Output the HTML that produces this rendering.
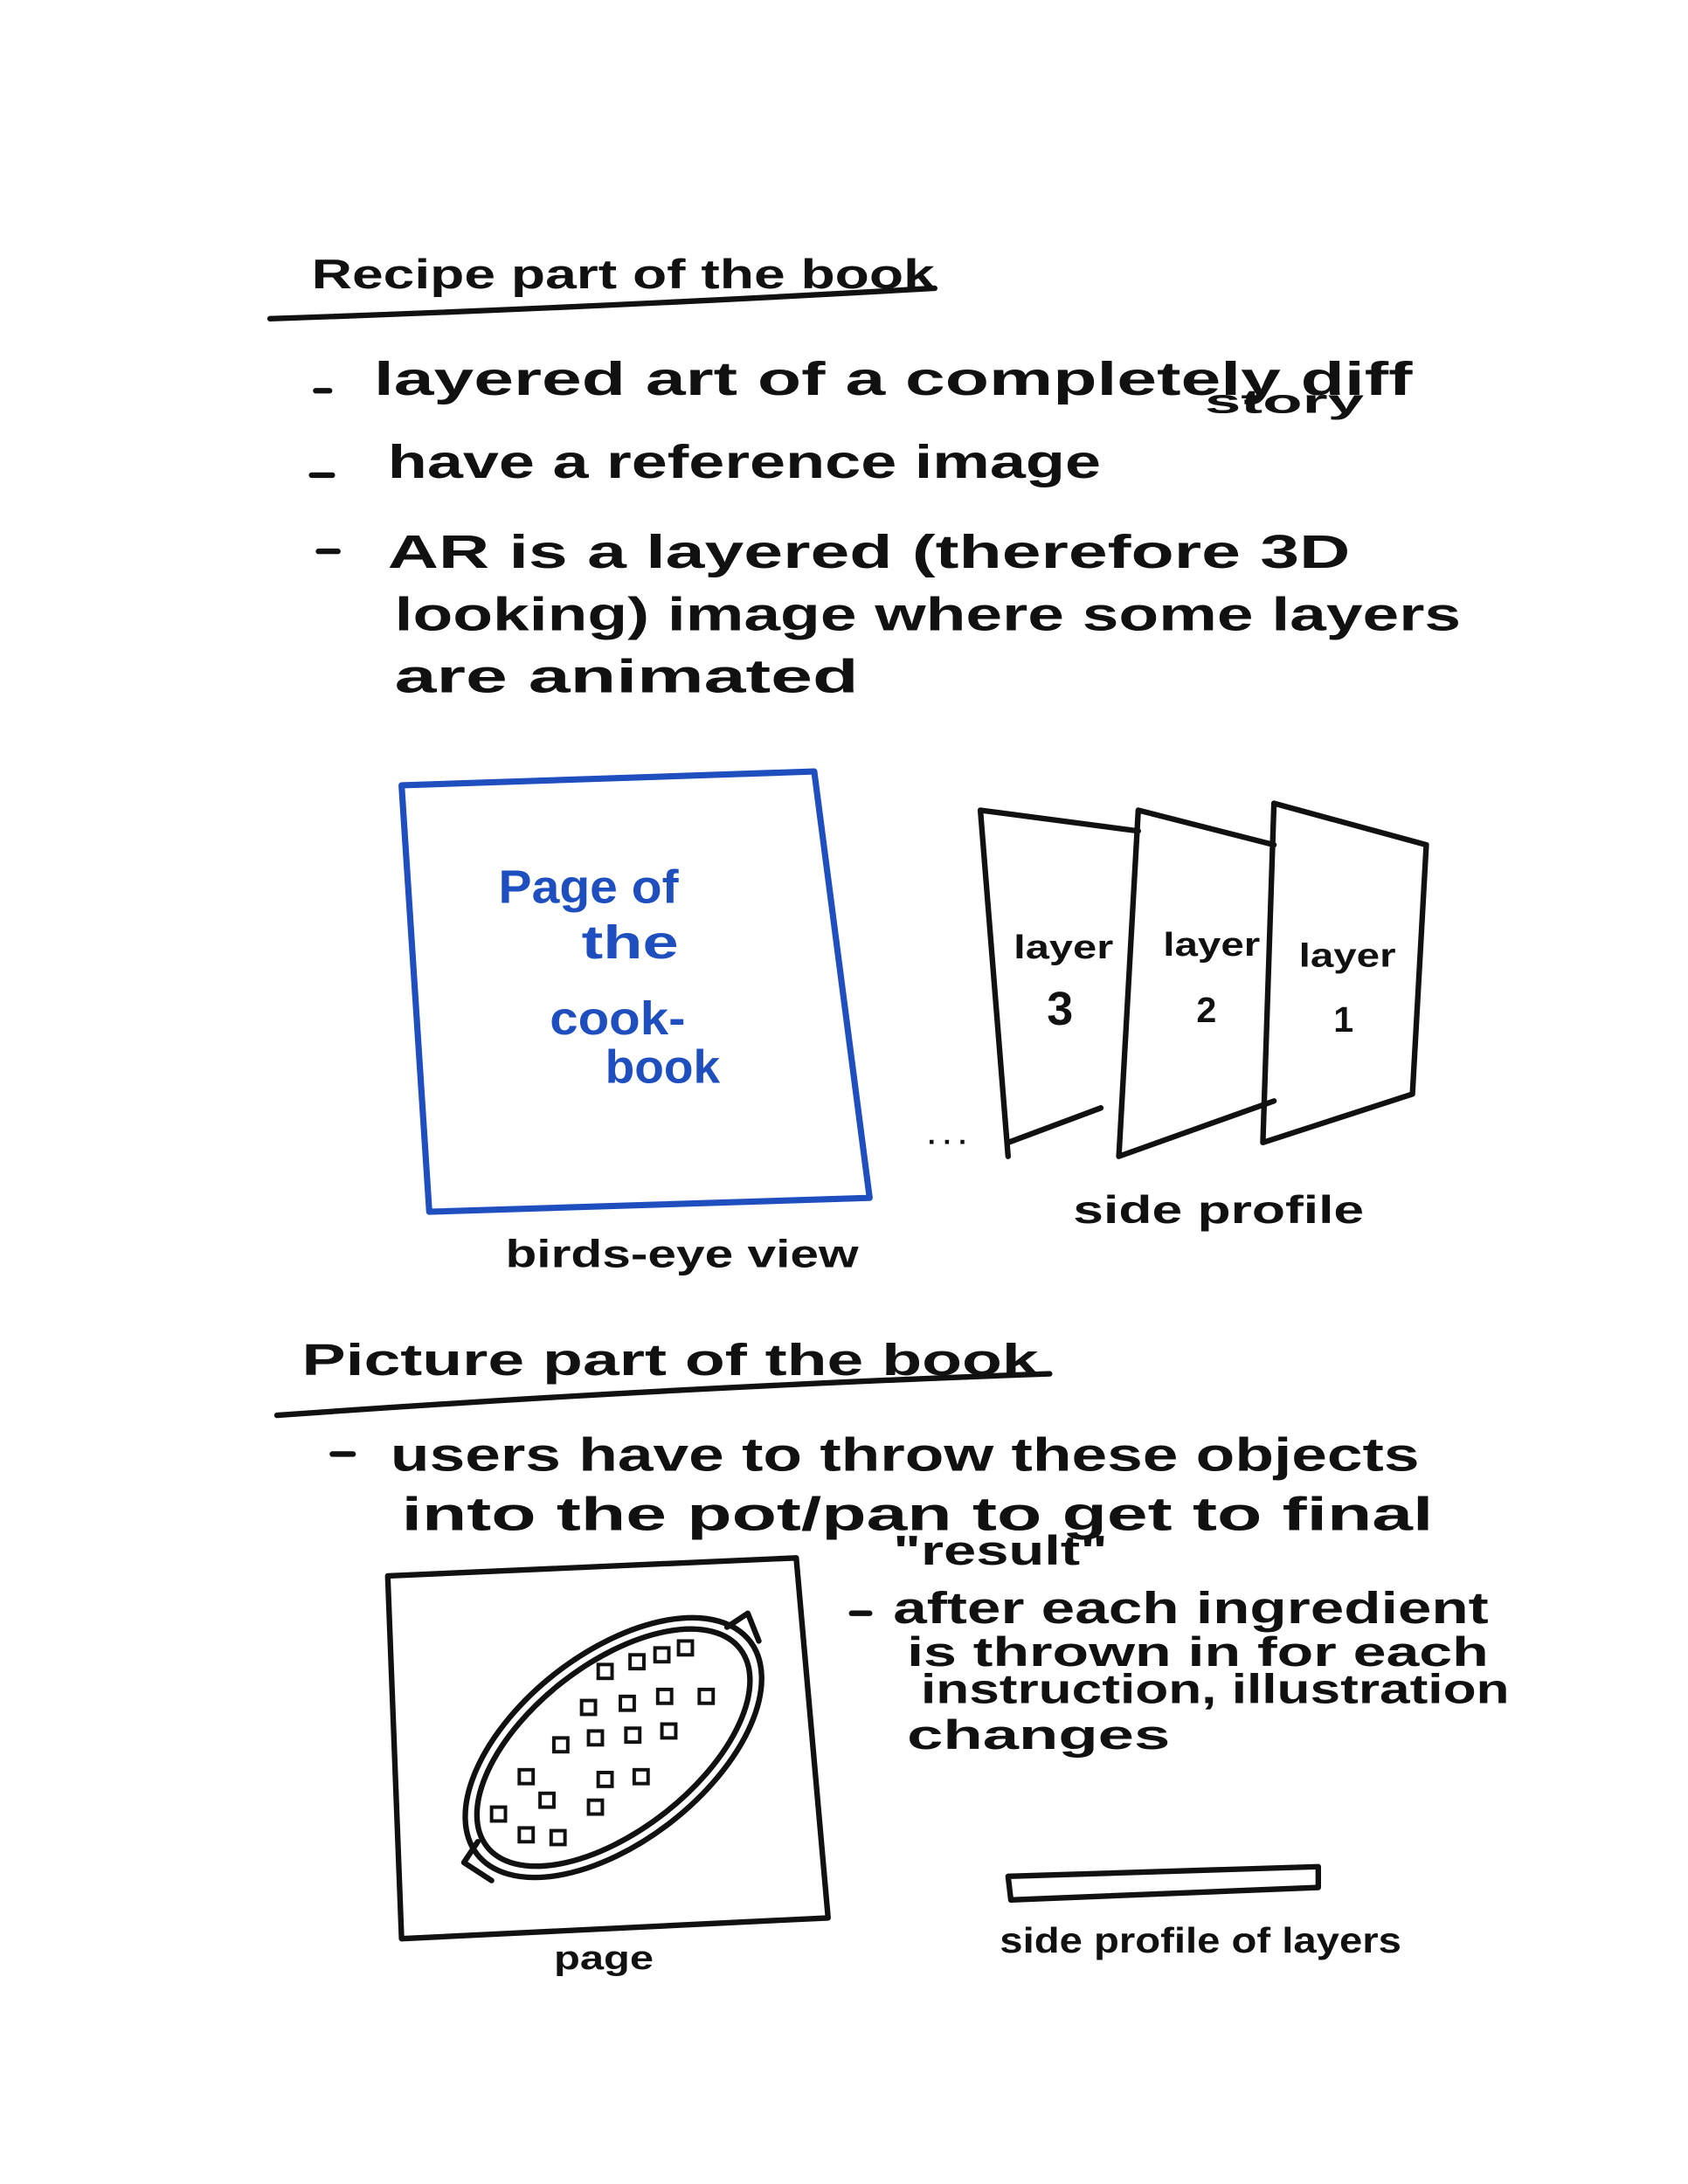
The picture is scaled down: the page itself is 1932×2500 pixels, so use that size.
<!DOCTYPE html>
<html><head><meta charset="utf-8"><style>
html,body{margin:0;padding:0;background:#fff;}
svg{display:block;}
text{font-family:"Liberation Sans",sans-serif;font-weight:bold;fill:#111;}
.b{fill:#1f4fbf;}
</style></head><body>
<svg width="1932" height="2500" viewBox="0 0 1219 1577" xmlns="http://www.w3.org/2000/svg">
<rect width="1219" height="1577" fill="#fff"/>
<g stroke="#111" stroke-width="4" fill="none" stroke-linecap="round" stroke-linejoin="round">
<path d="M195 230 Q430 222 675 208"/>
<path d="M228 282 L238 282 M225 343 L240 343 M230 398 L244 398"/>
<path d="M708 585 L822 600 M708 585 L728 835 M728 825 L795 800"/>
<path d="M822 585 L920 610 M822 585 L808 835 M808 835 L920 795"/>
<path d="M920 580 L1030 610 L1020 790 L912 825 L920 580"/>
<path d="M200 1022 Q480 1002 758 992"/>
<path d="M240 1050 L255 1050 M615 1165 L628 1165"/>
<path d="M280 1138 L575 1125 L598 1385 L290 1400 Z"/>
<ellipse cx="443" cy="1262" rx="125" ry="68" transform="rotate(-38 443 1262)"/>
<ellipse cx="443" cy="1262" rx="116" ry="60" transform="rotate(-38 443 1262)"/>
<path d="M525 1175 L540 1165 L548 1185 M345 1330 L335 1345 L355 1358"/>
<path d="M728 1355 L952 1348 L952 1363 L730 1372 Z"/>
<text x="670" y="826" stroke="none" style="font-size:20px">. . .</text>
</g>
<g stroke="#111" stroke-width="2.5" fill="none">
<rect x="432" y="1202" width="10" height="10"/><rect x="455" y="1195" width="10" height="10"/><rect x="473" y="1190" width="10" height="10"/><rect x="490" y="1185" width="10" height="10"/>
<rect x="420" y="1228" width="10" height="10"/><rect x="448" y="1225" width="10" height="10"/><rect x="475" y="1220" width="10" height="10"/><rect x="505" y="1220" width="10" height="10"/>
<rect x="400" y="1255" width="10" height="10"/><rect x="425" y="1250" width="10" height="10"/><rect x="452" y="1248" width="10" height="10"/><rect x="478" y="1245" width="10" height="10"/>
<rect x="375" y="1278" width="10" height="10"/><rect x="432" y="1280" width="10" height="10"/><rect x="458" y="1278" width="10" height="10"/>
<rect x="390" y="1295" width="10" height="10"/><rect x="355" y="1305" width="10" height="10"/><rect x="425" y="1300" width="10" height="10"/>
<rect x="375" y="1320" width="10" height="10"/><rect x="398" y="1322" width="10" height="10"/>
</g>
<path d="M290 567 L588 557 L628 865 L310 875 Z" fill="none" stroke="#1f4fbf" stroke-width="4.5" stroke-linejoin="round"/>
<text x="225" y="208" font-size="30" textLength="450" lengthAdjust="spacingAndGlyphs">Recipe part of the book</text>
<text x="270" y="285" font-size="34" textLength="750" lengthAdjust="spacingAndGlyphs">layered art of a completely diff</text>
<text x="870" y="298" font-size="24" textLength="115" lengthAdjust="spacingAndGlyphs">story</text>
<text x="280" y="345" font-size="34" textLength="515" lengthAdjust="spacingAndGlyphs">have a reference image</text>
<text x="280" y="410" font-size="34" textLength="695" lengthAdjust="spacingAndGlyphs">AR is a layered (therefore 3D</text>
<text x="285" y="455" font-size="34" textLength="770" lengthAdjust="spacingAndGlyphs">looking) image where some layers</text>
<text x="285" y="500" font-size="34" textLength="335" lengthAdjust="spacingAndGlyphs">are animated</text>
<text class="b" x="360" y="652" font-size="34" textLength="130" lengthAdjust="spacingAndGlyphs">Page of</text>
<text class="b" x="420" y="692" font-size="34" textLength="70" lengthAdjust="spacingAndGlyphs">the</text>
<text class="b" x="397" y="747" font-size="34" textLength="98" lengthAdjust="spacingAndGlyphs">cook-</text>
<text class="b" x="437" y="782" font-size="34" textLength="83" lengthAdjust="spacingAndGlyphs">book</text>
<text x="365" y="915" font-size="28" textLength="255" lengthAdjust="spacingAndGlyphs">birds-eye view</text>
<text x="732" y="692" font-size="24" textLength="72" lengthAdjust="spacingAndGlyphs">layer</text>
<text x="756" y="740" font-size="34">3</text>
<text x="840" y="690" font-size="24" textLength="70" lengthAdjust="spacingAndGlyphs">layer</text>
<text x="864" y="738" font-size="26">2</text>
<text x="938" y="698" font-size="24" textLength="70" lengthAdjust="spacingAndGlyphs">layer</text>
<text x="963" y="745" font-size="26">1</text>
<text x="775" y="883" font-size="28" textLength="210" lengthAdjust="spacingAndGlyphs">side profile</text>
<text x="218" y="993" font-size="32" textLength="532" lengthAdjust="spacingAndGlyphs">Picture part of the book</text>
<text x="282" y="1062" font-size="34" textLength="743" lengthAdjust="spacingAndGlyphs">users have to throw these objects</text>
<text x="290" y="1105" font-size="34" textLength="745" lengthAdjust="spacingAndGlyphs">into the pot/pan to get to final</text>
<text x="645" y="1130" font-size="30" textLength="155" lengthAdjust="spacingAndGlyphs">"result"</text>
<text x="645" y="1172" font-size="32" textLength="430" lengthAdjust="spacingAndGlyphs">after each ingredient</text>
<text x="655" y="1203" font-size="30" textLength="420" lengthAdjust="spacingAndGlyphs">is thrown in for each</text>
<text x="665" y="1230" font-size="30" textLength="425" lengthAdjust="spacingAndGlyphs">instruction, illustration</text>
<text x="655" y="1263" font-size="30" textLength="190" lengthAdjust="spacingAndGlyphs">changes</text>
<text x="400" y="1422" font-size="24" textLength="72" lengthAdjust="spacingAndGlyphs">page</text>
<text x="722" y="1410" font-size="26" textLength="290" lengthAdjust="spacingAndGlyphs">side profile of layers</text>
</svg>
</body></html>
